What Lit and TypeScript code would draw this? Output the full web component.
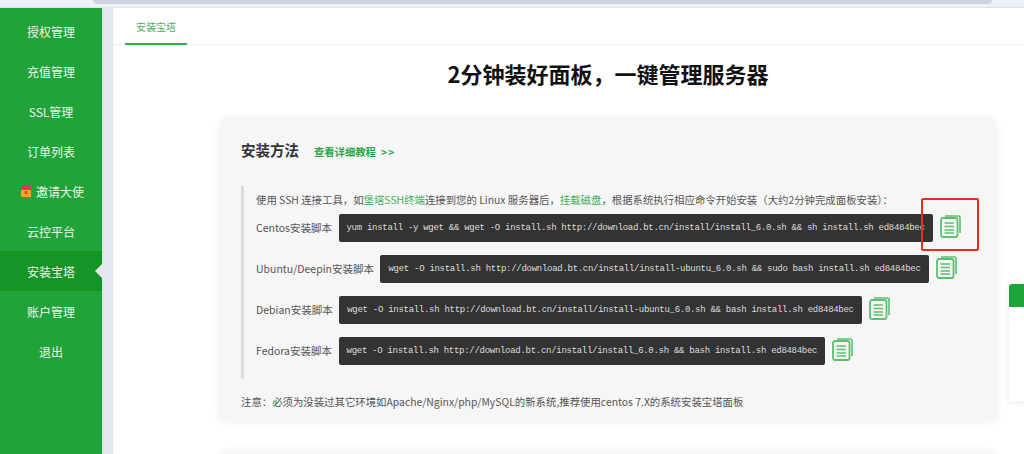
import { LitElement, html, css, svg } from "lit";
import { customElement } from "lit/decorators.js";

const MENU = ["授权管理", "充值管理", "SSL管理", "订单列表", "邀请大使", "云控平台", "安装宝塔", "账户管理", "退出"];
const ROWS = [
  { label: "Centos安装脚本", cmd: "yum install -y wget && wget -O install.sh http://download.bt.cn/install/install_6.0.sh && sh install.sh ed8484bec" },
  { label: "Ubuntu/Deepin安装脚本", cmd: "wget -O install.sh http://download.bt.cn/install/install-ubuntu_6.0.sh && sudo bash install.sh ed8484bec" },
  { label: "Debian安装脚本", cmd: "wget -O install.sh http://download.bt.cn/install/install-ubuntu_6.0.sh && bash install.sh ed8484bec" },
  { label: "Fedora安装脚本", cmd: "wget -O install.sh http://download.bt.cn/install/install_6.0.sh && bash install.sh ed8484bec" },
];

const copyIcon = svg`<svg class="copy" width="21" height="23" viewBox="0 0 21 23" fill="none" stroke="#5cc06f" stroke-width="1.6">
  <path d="M5 1h13.5a1.5 1.5 0 0 1 1.5 1.5V18" />
  <rect x="1" y="3" width="16.5" height="19" rx="2" fill="#f6f6f6" stroke-width="1.8"/>
  <path d="M4.5 8h9.5M4.5 11.5h9.5M4.5 15h9.5M4.5 18h9.5" stroke-width="1.3"/>
</svg>`;

const gift = svg`<svg width="10" height="11" viewBox="0 0 10 11"><rect width="10" height="11" fill="#f5a623"/><rect width="10" height="4" fill="#e8305a"/><rect x="3.5" y="5" width="3" height="3" fill="#d9502e"/></svg>`;

@customElement("app-root")
export class AppRoot extends LitElement {
  static styles = css`
    :host { display: block; width: 1024px; height: 454px; overflow: hidden; position: relative;
      font-family: "Noto Sans CJK SC", "Open Sans", sans-serif; background: #fff; }
    * { box-sizing: border-box; }
    .chrome { height: 8px; background: #edf1f9; position: relative; border-bottom: 1px solid #dfe3e6; }
    .chrome-tab { position: absolute; left: 93px; width: 899px; top: 0; height: 4px; background: #cdd3df; border-radius: 0 0 5px 5px; }
    .body { display: flex; height: 446px; }
    .side { width: 102px; background: #22a33a; flex: none; display: flex; flex-direction: column; padding-top: 3px; }
    .item { height: 40px; display: flex; align-items: center; justify-content: center; gap: 5px; color: #e9f6eb; font-size: 12px; position: relative; }
    .item.gift { padding-left: 3px; }
    .item.active { background: #149526; }
    .item.active::after { content: ""; position: absolute; right: 0; top: 13px; border: 7px solid transparent; border-left-width: 0; border-right-color: #e4e7ee; }
    .gutter { width: 11px; background: #e4e7ee; flex: none; }
    .main { flex: 1; min-width: 0; position: relative; }
    .tabs { height: 37px; border-bottom: 1px solid #f0f0f0; padding-left: 12px; }
    .tab { width: 62px; height: 37px; border-bottom: 2px solid #2fb344; color: #52ad64; font-size: 10px; text-align: center; line-height: 37px; }
    h1 { margin: 0 0 0 107px; width: 776px; height: 73px; padding-top: 15px; font-size: 22px; line-height: 26px; font-weight: 700; color: #111; text-align: center; }
    .card { margin-left: 107px; width: 776px; height: 304px; background: #f6f6f6; border-radius: 6px; box-shadow: 0 0 10px rgba(0,0,0,.07); padding: 20px 21px 0; }
    .head { display: flex; align-items: baseline; gap: 15px; height: 24px; }
    .head b { font-size: 14.5px; color: #333; line-height: 24px; }
    .head a { font-size: 10.3px; font-weight: 700; color: #2da648; }
    .head a span { letter-spacing: 1px; margin-left: 2px; }
    .quote { margin-top: 24px; border-left: 3px solid #ddd; height: 193px; padding: 7px 0 0 12px; font-size: 10.4px; color: #555; }
    .intro { line-height: 14px; height: 14px; white-space: nowrap; }
    .intro a { color: #3fb05a; }
    .row { display: flex; align-items: center; height: 41px; white-space: nowrap; }
    .row span { margin-right: 6.5px; font-size: 10.5px; color: #555; }
    .cmd { background: #333; color: #ddd; height: 28px; line-height: 28px; padding: 0 8px; border-radius: 2px;
      font-family: "Liberation Mono", monospace; font-size: 9px; letter-spacing: -0.285px; }
    .copy { margin: -2px 0 0 7px; flex: none; }
    .note { font-size: 10.4px; color: #555; margin-top: 15px; white-space: nowrap; }
    .card2 { margin: 30px 0 0 107px; width: 776px; height: 40px; background: #f6f6f6; border-radius: 6px; box-shadow: 0 0 10px rgba(0,0,0,.07); }
    .float { position: absolute; left: 896px; top: 276px; width: 30px; height: 117px; background: #fff; box-shadow: 0 0 8px rgba(0,0,0,.1); border-top-left-radius: 3px; }
    .float i { display: block; height: 23px; background: #1ca53a; border-top-left-radius: 3px; }
    .mark { position: absolute; left: 808px; top: 190px; width: 58px; height: 53px; border: 2px solid #f02a1e; border-radius: 2px; }
  `;

  render() {
    return html`
      <div class="chrome"><div class="chrome-tab"></div></div>
      <div class="body">
        <nav class="side">
          ${MENU.map((m, i) => html`<div class="item ${i === 6 ? "active" : ""} ${i === 4 ? "gift" : ""}">${i === 4 ? gift : ""}${m}</div>`)}
        </nav>
        <div class="gutter"></div>
        <main class="main">
          <div class="tabs"><div class="tab">安装宝塔</div></div>
          <h1>2分钟装好面板，一键管理服务器</h1>
          <section class="card">
            <div class="head"><b>安装方法</b><a>查看详细教程<span> >></span></a></div>
            <div class="quote">
              <div class="intro">使用 SSH 连接工具，如<a>堡塔SSH终端</a>连接到您的 Linux 服务器后，<a>挂载磁盘</a>，根据系统执行相应命令开始安装（大约2分钟完成面板安装）：</div>
              ${ROWS.map((r) => html`<div class="row"><span>${r.label}</span><div class="cmd">${r.cmd}</div>${copyIcon}</div>`)}
            </div>
            <div class="note">注意：必须为没装过其它环境如Apache/Nginx/php/MySQL的新系统,推荐使用centos 7.X的系统安装宝塔面板</div>
          </section>
          <section class="card2"></section>
          <div class="float"><i></i></div>
          <div class="mark"></div>
        </main>
      </div>
    `;
  }
}
